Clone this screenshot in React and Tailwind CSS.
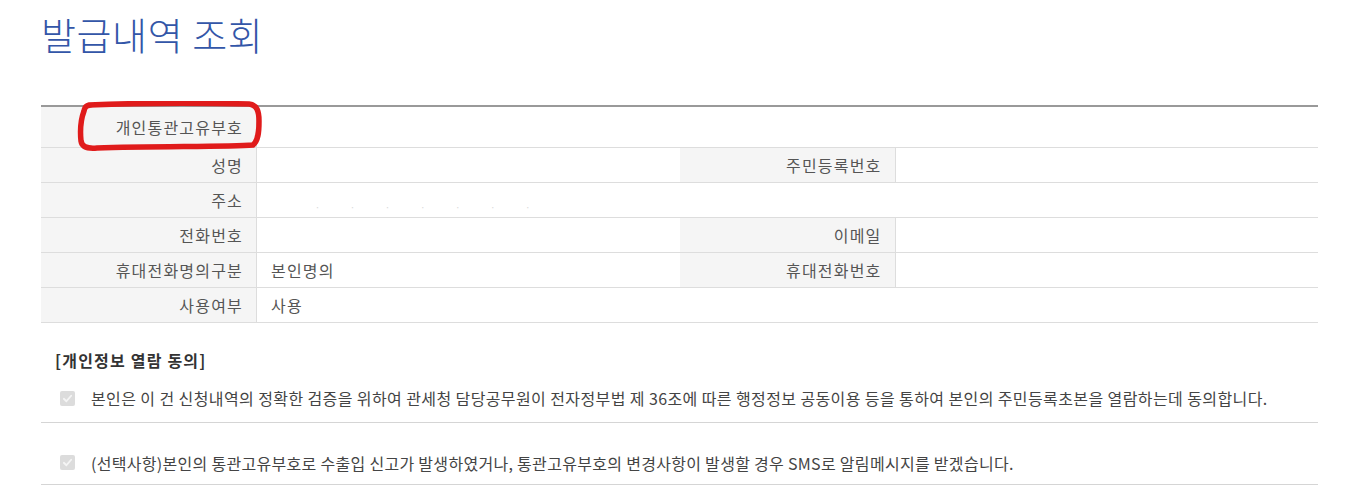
import React from "react";

const font = { fontFamily: '"Noto Sans CJK KR", "Noto Sans", sans-serif' };

function Label({ children }) {
  return (
    <div className="w-[216px] shrink-0 bg-[#f5f5f5] border-r border-[#dddddd] flex items-center justify-end pr-[13px] text-[16px] text-[#555] tracking-[1.2px]">
      {children}
    </div>
  );
}

function Value({ children }) {
  return (
    <div className="flex-1 flex items-center pl-[14px] text-[16px] text-[#555] tracking-[1.2px] bg-white">
      {children}
    </div>
  );
}

function Row({ children, h = "h-[35px]" }) {
  return <div className={`flex ${h} border-b border-[#dddddd]`}>{children}</div>;
}

function Check() {
  return (
    <span className="w-[15px] h-[15px] rounded-[2px] bg-[#dcdcdc] flex items-center justify-center shrink-0">
      <svg width="11" height="11" viewBox="0 0 12 12">
        <path d="M2 6.3 L4.8 9 L10 3" fill="none" stroke="#f5f5f5" strokeWidth="2" strokeLinecap="round" strokeLinejoin="round" />
      </svg>
    </span>
  );
}

export default function App() {
  return (
    <div className="w-[1348px] h-[504px] bg-white overflow-hidden" style={font}>
      <div className="pl-[41px] w-[1318px]">
        <h1 className="text-[38px] leading-none font-light text-[#3356a8] pt-[15px] tracking-[0.6px]">발급내역 조회</h1>
        <div className="relative mt-[52px] border-t-2 border-[#999999]">
          <Row h="h-[41px]">
            <Label>개인통관고유부호</Label>
            <Value />
          </Row>
          <Row>
            <Label>성명</Label>
            <Value />
            <Label>주민등록번호</Label>
            <Value />
          </Row>
          <Row>
            <Label>주소</Label>
            <Value>
              <span className="text-[#d8d8d8] text-[9px] tracking-[30px] pt-[16px] pl-[44px]">·······</span>
            </Value>
          </Row>
          <Row>
            <Label>전화번호</Label>
            <Value />
            <Label>이메일</Label>
            <Value />
          </Row>
          <Row>
            <Label>휴대전화명의구분</Label>
            <Value>본인명의</Value>
            <Label>휴대전화번호</Label>
            <Value />
          </Row>
          <Row>
            <Label>사용여부</Label>
            <Value>사용</Value>
          </Row>
          <svg className="absolute left-[-4px] top-[-6px] pointer-events-none" width="240" height="60" viewBox="0 0 240 60">
            <path
              d="M52 4 C100 2 170 2 212 3 C220 4 222 10 222 20 C222 32 221 40 216 44 C190 46 120 45 60 47 C50 48 45 46 44 40 C43 30 44 18 47 10 C48 5 50 4 56 4"
              fill="none"
              stroke="#e01b1b"
              strokeWidth="5.5"
              strokeLinecap="round"
              strokeLinejoin="round"
            />
          </svg>
        </div>
        <div className="mt-[25px] pl-[14px] text-[16px] font-bold text-[#333] tracking-[1.2px]">[개인정보 열람 동의]</div>
        <div className="mt-[8px] flex items-center h-[36px] border-b border-[#d5d5d5] pl-[19px] gap-[16px] text-[16px] text-[#444] tracking-[0.4px] pb-[6px] box-content">
          <Check />
          <span>본인은 이 건 신청내역의 정확한 검증을 위하여 관세청 담당공무원이 전자정부법 제 36조에 따른 행정정보 공동이용 등을 통하여 본인의 주민등록초본을 열람하는데 동의합니다.</span>
        </div>
        <div className="flex items-center h-[62px] border-b border-[#d5d5d5] pl-[19px] gap-[16px] text-[16px] text-[#444] tracking-[0.3px] pt-[18px] box-border">
          <Check />
          <span>(선택사항)본인의 통관고유부호로 수출입 신고가 발생하였거나, 통관고유부호의 변경사항이 발생할 경우 SMS로 알림메시지를 받겠습니다.</span>
        </div>
      </div>
    </div>
  );
}
